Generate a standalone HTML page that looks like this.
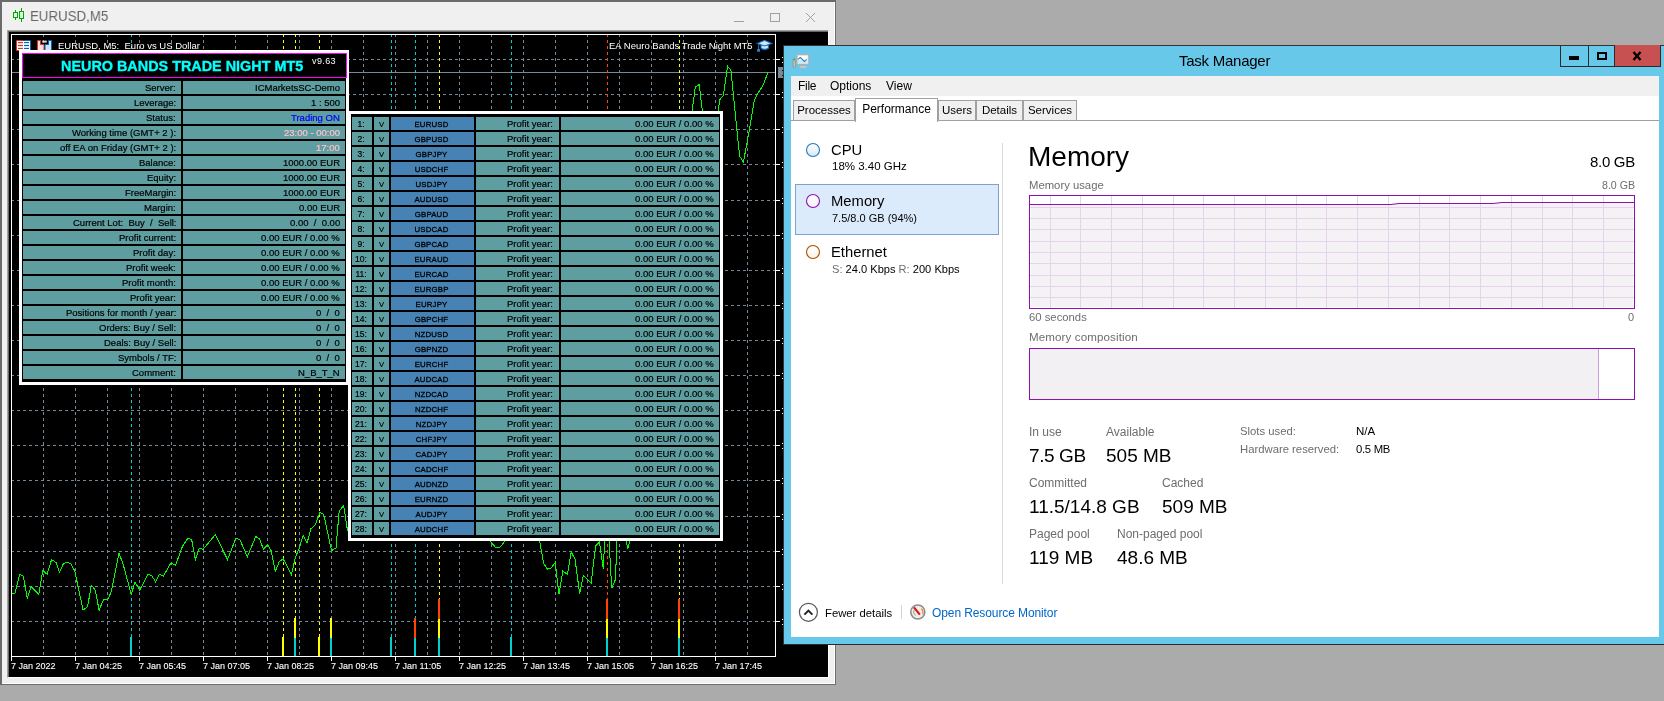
<!DOCTYPE html><html><head><meta charset="utf-8"><style>
*{margin:0;padding:0;box-sizing:border-box}
html,body{width:1664px;height:701px;overflow:hidden;background:#ababab;font-family:"Liberation Sans",sans-serif}
.abs{position:absolute}
.t{position:absolute;white-space:nowrap;line-height:1;will-change:transform}
.k{-webkit-text-stroke:0.25px currentColor}

</style></head><body>
<div class="abs" style="left:0;top:0;width:836px;height:685px;background:#f0f0f0;border-left:2px solid #6b6b6b;border-top:2px solid #6b6b6b;border-right:1px solid #6e6e6e;border-bottom:1px solid #6e6e6e;box-shadow:inset -1px -1px 0 #fff"></div>
<svg class="abs" style="left:0;top:0" width="30" height="30"><g stroke="#00a800" stroke-width="1" fill="#e0ffe0">
<line x1="15.5" y1="10" x2="15.5" y2="20"/><rect x="13.5" y="12.5" width="4" height="5"/>
<line x1="21.5" y1="8" x2="21.5" y2="22"/><rect x="19.5" y="11.5" width="4" height="7"/></g></svg>
<div class="t" style="left:30px;top:7.8px;font-size:15.5px;color:#686868;transform-origin:0 0;transform:scaleX(0.857)">EURUSD,M5</div>
<svg class="abs" style="left:720px;top:0" width="110" height="30"><g stroke="#a0a0a0" stroke-width="1" fill="none">
<line x1="14" y1="21.5" x2="24" y2="21.5"/>
<rect x="50.5" y="13.5" width="9" height="8"/>
<line x1="86" y1="13" x2="95" y2="22"/><line x1="95" y1="13" x2="86" y2="22"/></g></svg>
<div class="abs" style="left:7px;top:30px;width:822px;height:648px;background:#000;border-left:1px solid #a0a0a0;border-top:1px solid #a0a0a0;border-right:1px solid #ffffff;border-bottom:1px solid #ffffff;box-shadow:inset 1px 1px 0 #696969"></div>
<svg class="abs" style="left:0;top:0" width="836" height="686"><line x1="11" y1="59.5" x2="775" y2="59.5" stroke="#778899" stroke-dasharray="3 3"/><line x1="11" y1="94.5" x2="775" y2="94.5" stroke="#778899" stroke-dasharray="3 3"/><line x1="11" y1="129.5" x2="775" y2="129.5" stroke="#778899" stroke-dasharray="3 3"/><line x1="11" y1="164.5" x2="775" y2="164.5" stroke="#778899" stroke-dasharray="3 3"/><line x1="11" y1="200.5" x2="775" y2="200.5" stroke="#778899" stroke-dasharray="3 3"/><line x1="11" y1="235.5" x2="775" y2="235.5" stroke="#778899" stroke-dasharray="3 3"/><line x1="11" y1="270.5" x2="775" y2="270.5" stroke="#778899" stroke-dasharray="3 3"/><line x1="11" y1="305.5" x2="775" y2="305.5" stroke="#778899" stroke-dasharray="3 3"/><line x1="11" y1="340.5" x2="775" y2="340.5" stroke="#778899" stroke-dasharray="3 3"/><line x1="11" y1="375.5" x2="775" y2="375.5" stroke="#778899" stroke-dasharray="3 3"/><line x1="11" y1="410.5" x2="775" y2="410.5" stroke="#778899" stroke-dasharray="3 3"/><line x1="11" y1="445.5" x2="775" y2="445.5" stroke="#778899" stroke-dasharray="3 3"/><line x1="11" y1="480.5" x2="775" y2="480.5" stroke="#778899" stroke-dasharray="3 3"/><line x1="11" y1="516.5" x2="775" y2="516.5" stroke="#778899" stroke-dasharray="3 3"/><line x1="11" y1="551.5" x2="775" y2="551.5" stroke="#778899" stroke-dasharray="3 3"/><line x1="11" y1="586.5" x2="775" y2="586.5" stroke="#778899" stroke-dasharray="3 3"/><line x1="11" y1="621.5" x2="775" y2="621.5" stroke="#778899" stroke-dasharray="3 3"/><line x1="43.5" y1="34" x2="43.5" y2="656" stroke="#778899" stroke-dasharray="3 3"/><line x1="75.5" y1="34" x2="75.5" y2="656" stroke="#778899" stroke-dasharray="3 3"/><line x1="107.5" y1="34" x2="107.5" y2="656" stroke="#778899" stroke-dasharray="3 3"/><line x1="139.5" y1="34" x2="139.5" y2="656" stroke="#778899" stroke-dasharray="3 3"/><line x1="171.5" y1="34" x2="171.5" y2="656" stroke="#778899" stroke-dasharray="3 3"/><line x1="203.5" y1="34" x2="203.5" y2="656" stroke="#778899" stroke-dasharray="3 3"/><line x1="235.5" y1="34" x2="235.5" y2="656" stroke="#778899" stroke-dasharray="3 3"/><line x1="267.5" y1="34" x2="267.5" y2="656" stroke="#778899" stroke-dasharray="3 3"/><line x1="299.5" y1="34" x2="299.5" y2="656" stroke="#778899" stroke-dasharray="3 3"/><line x1="331.5" y1="34" x2="331.5" y2="656" stroke="#778899" stroke-dasharray="3 3"/><line x1="363.5" y1="34" x2="363.5" y2="656" stroke="#778899" stroke-dasharray="3 3"/><line x1="395.5" y1="34" x2="395.5" y2="656" stroke="#778899" stroke-dasharray="3 3"/><line x1="427.5" y1="34" x2="427.5" y2="656" stroke="#778899" stroke-dasharray="3 3"/><line x1="459.5" y1="34" x2="459.5" y2="656" stroke="#778899" stroke-dasharray="3 3"/><line x1="491.5" y1="34" x2="491.5" y2="656" stroke="#778899" stroke-dasharray="3 3"/><line x1="523.5" y1="34" x2="523.5" y2="656" stroke="#778899" stroke-dasharray="3 3"/><line x1="555.5" y1="34" x2="555.5" y2="656" stroke="#778899" stroke-dasharray="3 3"/><line x1="587.5" y1="34" x2="587.5" y2="656" stroke="#778899" stroke-dasharray="3 3"/><line x1="619.5" y1="34" x2="619.5" y2="656" stroke="#778899" stroke-dasharray="3 3"/><line x1="651.5" y1="34" x2="651.5" y2="656" stroke="#778899" stroke-dasharray="3 3"/><line x1="683.5" y1="34" x2="683.5" y2="656" stroke="#778899" stroke-dasharray="3 3"/><line x1="715.5" y1="34" x2="715.5" y2="656" stroke="#778899" stroke-dasharray="3 3"/><line x1="747.5" y1="34" x2="747.5" y2="656" stroke="#778899" stroke-dasharray="3 3"/><line x1="11" y1="72.5" x2="775" y2="72.5" stroke="#778899"/><line x1="131.5" y1="34" x2="131.5" y2="656" stroke="#00ced1" stroke-dasharray="3 3"/><line x1="283.5" y1="34" x2="283.5" y2="656" stroke="#ffff00" stroke-dasharray="3 3"/><line x1="295.5" y1="34" x2="295.5" y2="656" stroke="#ffff00" stroke-dasharray="3 3"/><line x1="319.5" y1="34" x2="319.5" y2="656" stroke="#ffff00" stroke-dasharray="3 3"/><line x1="391.5" y1="34" x2="391.5" y2="656" stroke="#00ced1" stroke-dasharray="3 3"/><line x1="415.5" y1="34" x2="415.5" y2="656" stroke="#00ced1" stroke-dasharray="3 3"/><line x1="439.5" y1="34" x2="439.5" y2="656" stroke="#ffff00" stroke-dasharray="3 3"/><line x1="511.5" y1="34" x2="511.5" y2="656" stroke="#00ced1" stroke-dasharray="3 3"/><line x1="607.5" y1="34" x2="607.5" y2="656" stroke="#ff4500" stroke-dasharray="3 3"/><line x1="679.5" y1="34" x2="679.5" y2="656" stroke="#ffff00" stroke-dasharray="3 3"/><rect x="130" y="637" width="2" height="19" fill="#00ced1"/><rect x="282" y="637" width="2" height="19" fill="#ffff00"/><rect x="294" y="638" width="2" height="18" fill="#00ced1"/><rect x="294" y="618" width="2" height="20" fill="#ffff00"/><rect x="318" y="637" width="2" height="19" fill="#ffff00"/><rect x="330" y="638" width="2" height="18" fill="#00ced1"/><rect x="330" y="618" width="2" height="20" fill="#ffff00"/><rect x="390" y="637" width="2" height="19" fill="#00ced1"/><rect x="414" y="638" width="2" height="18" fill="#00ced1"/><rect x="414" y="618" width="2" height="20" fill="#ff4500"/><rect x="438" y="638" width="2" height="18" fill="#00ced1"/><rect x="438" y="619" width="2" height="19" fill="#ffff00"/><rect x="438" y="599" width="2" height="20" fill="#ff4500"/><rect x="510" y="637" width="2" height="19" fill="#00ced1"/><rect x="606" y="638" width="2" height="18" fill="#00ced1"/><rect x="606" y="619" width="2" height="19" fill="#ffff00"/><rect x="606" y="599" width="2" height="20" fill="#ff4500"/><rect x="678" y="638" width="2" height="18" fill="#00ced1"/><rect x="678" y="619" width="2" height="19" fill="#ffff00"/><rect x="678" y="599" width="2" height="20" fill="#ff4500"/><polyline points="11.8,594.2 15.1,592.9 19.6,574.3 23.4,576.2 27.3,598.7 31.1,586.5 38.8,594.2 42.7,570.4 47.1,574.3 51.6,559.5 56.1,562.7 59.4,572.4 63.2,564.0 67.0,562.1 70.9,564.0 74.8,571.0 83.1,610.2 87.6,606.4 91.4,585.2 95.3,590.3 99.1,610.2 103.6,599.3 107.5,600.0 111.3,591.6 119.0,553.1 122.9,563.4 131.2,594.2 135.1,582.0 139.6,590.3 147.9,574.3 151.8,575.6 155.6,582.0 159.5,574.3 163.3,576.2 171.0,562.7 175.5,565.3 182.6,546.0 187.7,538.4 191.6,539.3 195.4,559.6 199.3,548.0 203.1,549.3 215.3,534.6 227.5,559.6 235.8,538.4 239.7,539.3 247.4,556.8 255.7,536.5 259.6,539.0 263.4,549.3 267.9,544.8 271.1,550.6 275.3,571.4 279.3,561.4 283.2,558.9 291.4,574.6 295.7,556.4 298.9,549.3 301.7,540.0 303.2,535.8 307.1,542.9 310.9,528.8 315.4,524.9 319.9,512.1 323.8,514.7 331.5,550.6 336.0,548.0 339.2,510.8 343.7,505.7 347.5,530.7 349.0,520.0" fill="none" stroke="#00ff00" stroke-width="1" shape-rendering="crispEdges"/><polyline points="490.0,541.0 496.0,548.0 500.0,547.3 504.5,541.6 506.0,530.0" fill="none" stroke="#00ff00" stroke-width="1" shape-rendering="crispEdges"/><polyline points="536.0,530.0 539.8,541.6 543.6,563.4 547.5,569.2 551.3,567.9 555.2,562.7 559.0,594.2 562.9,571.1 567.4,574.3 571.2,551.8 575.1,559.5 579.6,593.5 583.4,575.6 591.1,583.3 595.6,546.0 599.5,542.2 603.3,568.5 604.6,541.6 606.0,530.0" fill="none" stroke="#00ff00" stroke-width="1" shape-rendering="crispEdges"/><polyline points="608.0,530.0 609.1,541.6 611.7,588.4 615.5,579.4 616.8,541.6 618.0,530.0" fill="none" stroke="#00ff00" stroke-width="1" shape-rendering="crispEdges"/><polyline points="625.0,530.0 626.4,541.6 627.7,548.6 629.7,541.6 631.0,530.0" fill="none" stroke="#00ff00" stroke-width="1" shape-rendering="crispEdges"/><polyline points="690.0,130.0 692.1,110.9 695.3,87.1 699.2,84.6 702.4,110.9 704.0,130.0" fill="none" stroke="#00ff00" stroke-width="1" shape-rendering="crispEdges"/><polyline points="716.0,130.0 718.2,109.9 720.0,99.6 723.4,95.3 727.6,66.3 731.0,70.5 735.3,114.2 739.6,156.1 743.4,162.1 749.0,132.1 754.2,101.3 756.7,95.3 763.6,84.2 767.9,72.2" fill="none" stroke="#00ff00" stroke-width="1" shape-rendering="crispEdges"/><rect x="11.5" y="34.5" width="764" height="622" fill="none" stroke="#fff"/><line x1="11.5" y1="656" x2="11.5" y2="661" stroke="#fff"/><line x1="75.5" y1="656" x2="75.5" y2="661" stroke="#fff"/><line x1="139.5" y1="656" x2="139.5" y2="661" stroke="#fff"/><line x1="203.5" y1="656" x2="203.5" y2="661" stroke="#fff"/><line x1="267.5" y1="656" x2="267.5" y2="661" stroke="#fff"/><line x1="331.5" y1="656" x2="331.5" y2="661" stroke="#fff"/><line x1="395.5" y1="656" x2="395.5" y2="661" stroke="#fff"/><line x1="459.5" y1="656" x2="459.5" y2="661" stroke="#fff"/><line x1="523.5" y1="656" x2="523.5" y2="661" stroke="#fff"/><line x1="587.5" y1="656" x2="587.5" y2="661" stroke="#fff"/><line x1="651.5" y1="656" x2="651.5" y2="661" stroke="#fff"/><line x1="715.5" y1="656" x2="715.5" y2="661" stroke="#fff"/><line x1="776" y1="59.5" x2="780" y2="59.5" stroke="#fff"/><rect x="782" y="57" width="1" height="1" fill="#fff"/><rect x="782" y="62" width="1" height="1" fill="#fff"/><line x1="776" y1="94.5" x2="780" y2="94.5" stroke="#fff"/><rect x="782" y="92" width="1" height="1" fill="#fff"/><rect x="782" y="97" width="1" height="1" fill="#fff"/><line x1="776" y1="129.5" x2="780" y2="129.5" stroke="#fff"/><rect x="782" y="127" width="1" height="1" fill="#fff"/><rect x="782" y="132" width="1" height="1" fill="#fff"/><line x1="776" y1="164.5" x2="780" y2="164.5" stroke="#fff"/><rect x="782" y="162" width="1" height="1" fill="#fff"/><rect x="782" y="167" width="1" height="1" fill="#fff"/><line x1="776" y1="200.5" x2="780" y2="200.5" stroke="#fff"/><rect x="782" y="198" width="1" height="1" fill="#fff"/><rect x="782" y="203" width="1" height="1" fill="#fff"/><line x1="776" y1="235.5" x2="780" y2="235.5" stroke="#fff"/><rect x="782" y="233" width="1" height="1" fill="#fff"/><rect x="782" y="238" width="1" height="1" fill="#fff"/><line x1="776" y1="270.5" x2="780" y2="270.5" stroke="#fff"/><rect x="782" y="268" width="1" height="1" fill="#fff"/><rect x="782" y="273" width="1" height="1" fill="#fff"/><line x1="776" y1="305.5" x2="780" y2="305.5" stroke="#fff"/><rect x="782" y="303" width="1" height="1" fill="#fff"/><rect x="782" y="308" width="1" height="1" fill="#fff"/><line x1="776" y1="340.5" x2="780" y2="340.5" stroke="#fff"/><rect x="782" y="338" width="1" height="1" fill="#fff"/><rect x="782" y="343" width="1" height="1" fill="#fff"/><line x1="776" y1="375.5" x2="780" y2="375.5" stroke="#fff"/><rect x="782" y="373" width="1" height="1" fill="#fff"/><rect x="782" y="378" width="1" height="1" fill="#fff"/><line x1="776" y1="410.5" x2="780" y2="410.5" stroke="#fff"/><rect x="782" y="408" width="1" height="1" fill="#fff"/><rect x="782" y="413" width="1" height="1" fill="#fff"/><line x1="776" y1="445.5" x2="780" y2="445.5" stroke="#fff"/><rect x="782" y="443" width="1" height="1" fill="#fff"/><rect x="782" y="448" width="1" height="1" fill="#fff"/><line x1="776" y1="480.5" x2="780" y2="480.5" stroke="#fff"/><rect x="782" y="478" width="1" height="1" fill="#fff"/><rect x="782" y="483" width="1" height="1" fill="#fff"/><line x1="776" y1="516.5" x2="780" y2="516.5" stroke="#fff"/><rect x="782" y="514" width="1" height="1" fill="#fff"/><rect x="782" y="519" width="1" height="1" fill="#fff"/><line x1="776" y1="551.5" x2="780" y2="551.5" stroke="#fff"/><rect x="782" y="549" width="1" height="1" fill="#fff"/><rect x="782" y="554" width="1" height="1" fill="#fff"/><line x1="776" y1="586.5" x2="780" y2="586.5" stroke="#fff"/><rect x="782" y="584" width="1" height="1" fill="#fff"/><rect x="782" y="589" width="1" height="1" fill="#fff"/><line x1="776" y1="621.5" x2="780" y2="621.5" stroke="#fff"/><rect x="782" y="619" width="1" height="1" fill="#fff"/><rect x="782" y="624" width="1" height="1" fill="#fff"/><rect x="778" y="67" width="6" height="11" fill="#778899"/><rect x="782" y="70" width="1" height="1" fill="#000"/><rect x="782" y="75" width="1" height="1" fill="#000"/></svg>
<div class="t" style="left:10.6px;top:662.0px;font-size:9px;color:#fff;-webkit-text-stroke:0.1px #fff">7 Jan 2022</div>
<div class="t" style="left:74.6px;top:662.0px;font-size:9px;color:#fff;-webkit-text-stroke:0.1px #fff">7 Jan 04:25</div>
<div class="t" style="left:138.6px;top:662.0px;font-size:9px;color:#fff;-webkit-text-stroke:0.1px #fff">7 Jan 05:45</div>
<div class="t" style="left:202.6px;top:662.0px;font-size:9px;color:#fff;-webkit-text-stroke:0.1px #fff">7 Jan 07:05</div>
<div class="t" style="left:266.6px;top:662.0px;font-size:9px;color:#fff;-webkit-text-stroke:0.1px #fff">7 Jan 08:25</div>
<div class="t" style="left:330.6px;top:662.0px;font-size:9px;color:#fff;-webkit-text-stroke:0.1px #fff">7 Jan 09:45</div>
<div class="t" style="left:394.6px;top:662.0px;font-size:9px;color:#fff;-webkit-text-stroke:0.1px #fff">7 Jan 11:05</div>
<div class="t" style="left:458.6px;top:662.0px;font-size:9px;color:#fff;-webkit-text-stroke:0.1px #fff">7 Jan 12:25</div>
<div class="t" style="left:522.6px;top:662.0px;font-size:9px;color:#fff;-webkit-text-stroke:0.1px #fff">7 Jan 13:45</div>
<div class="t" style="left:586.6px;top:662.0px;font-size:9px;color:#fff;-webkit-text-stroke:0.1px #fff">7 Jan 15:05</div>
<div class="t" style="left:650.6px;top:662.0px;font-size:9px;color:#fff;-webkit-text-stroke:0.1px #fff">7 Jan 16:25</div>
<div class="t" style="left:714.6px;top:662.0px;font-size:9px;color:#fff;-webkit-text-stroke:0.1px #fff">7 Jan 17:45</div>
<div class="t" style="left:57.5px;top:41px;font-size:9.5px;color:#fff">EURUSD, M5:&nbsp; Euro vs US Dollar</div>
<div class="t" style="left:609px;top:41px;font-size:9.5px;color:#fff">EA Neuro Bands Trade Night MT5</div>
<svg class="abs" style="left:14px;top:38px" width="42" height="14">
<rect x="3" y="3" width="13" height="9" fill="#fff"/>
<rect x="4" y="5" width="5" height="2" fill="#fde0d8"/><rect x="4" y="8" width="5" height="2" fill="#fde0d8"/>
<rect x="10" y="5" width="5" height="2" fill="#d0eeff"/><rect x="10" y="8" width="5" height="2" fill="#d0eeff"/>
<path d="M9.5 2.5 H2.5 V12.5 H9.5" fill="none" stroke="#e03028"/><path d="M9.5 2.5 H16.5 V12.5 H9.5" fill="none" stroke="#1060b0"/>
<g stroke="#e03028"><line x1="4" y1="4.5" x2="9" y2="4.5"/><line x1="4" y1="7.5" x2="9" y2="7.5"/><line x1="4" y1="10.5" x2="9" y2="10.5"/></g>
<g stroke="#1060b0"><line x1="10" y1="4.5" x2="15" y2="4.5"/><line x1="10" y1="7.5" x2="15" y2="7.5"/><line x1="10" y1="10.5" x2="15" y2="10.5"/></g>
<path d="M23.5 2.5 h3 v4 h3.5 v6 h-6.5 z" fill="#ffe0d8" stroke="#e03028"/>
<path d="M37.5 2.5 v10 h-6.5 v-6 h3.5 v-4 z" fill="#c8e6ff" stroke="#1060b0"/>
<rect x="28.2" y="2.6" width="4.6" height="2" fill="#d8d8d8"/>
</svg>
<svg class="abs" style="left:750px;top:36px" width="28" height="20">
<path d="M11 9.2 v3 q3.6 2.4 7.4 0 v-3" fill="#c8e8fc" stroke="#1a6cc0" stroke-width="1.1"/>
<path d="M7.2 7.4 L14.5 4.3 L21.8 7.4 L14.5 10 Z" fill="#c8e8fc" stroke="#1a6cc0" stroke-width="1.1"/>
<line x1="8.6" y1="7.4" x2="8.6" y2="13.5" stroke="#1a6cc0" stroke-width="1.1"/><rect x="7.1" y="13" width="2.9" height="2.7" fill="#2a7fd4"/>
</svg>
<div class="abs" style="left:19px;top:50px;width:330px;height:335px;background:#fff"></div>
<div class="abs" style="left:22px;top:53px;width:324px;height:329px;background:#000"></div>
<div class="abs" style="left:22px;top:53px;width:325px;height:25px;border:1px solid #ff00ff;background:#000"></div>
<div class="t" style="left:60.8px;top:58.9px;font-size:14.4px;font-weight:bold;color:#00ffff;-webkit-text-stroke:0.35px #00ffff">NEURO BANDS TRADE NIGHT MT5</div>
<div class="t" style="left:312px;top:56.6px;font-size:9px;color:#fff;letter-spacing:0.4px">v9.63</div>
<div class="abs" style="left:23px;top:81px;width:158px;height:13px;background:#5f9ea0"></div>
<div class="abs" style="left:183px;top:81px;width:162px;height:13px;background:#5f9ea0"></div>
<div class="t" style="right:1488px;top:83.2px;font-size:9.5px;color:#000;-webkit-text-stroke:0.2px #000">Server:</div>
<div class="t" style="right:1324px;top:83.2px;font-size:9.5px;color:#000;-webkit-text-stroke:0.2px #000">ICMarketsSC-Demo</div>
<div class="abs" style="left:23px;top:96px;width:158px;height:13px;background:#5f9ea0"></div>
<div class="abs" style="left:183px;top:96px;width:162px;height:13px;background:#5f9ea0"></div>
<div class="t" style="right:1488px;top:98.2px;font-size:9.5px;color:#000;-webkit-text-stroke:0.2px #000">Leverage:</div>
<div class="t" style="right:1324px;top:98.2px;font-size:9.5px;color:#000;-webkit-text-stroke:0.2px #000">1 : 500</div>
<div class="abs" style="left:23px;top:111px;width:158px;height:13px;background:#5f9ea0"></div>
<div class="abs" style="left:183px;top:111px;width:162px;height:13px;background:#5f9ea0"></div>
<div class="t" style="right:1488px;top:113.2px;font-size:9.5px;color:#000;-webkit-text-stroke:0.2px #000">Status:</div>
<div class="t" style="right:1324px;top:113.2px;font-size:9.5px;color:#0000ff;-webkit-text-stroke:0.2px #0000ff">Trading ON</div>
<div class="abs" style="left:23px;top:126px;width:158px;height:13px;background:#5f9ea0"></div>
<div class="abs" style="left:183px;top:126px;width:162px;height:13px;background:#5f9ea0"></div>
<div class="t" style="right:1488px;top:128.2px;font-size:9.5px;color:#000;-webkit-text-stroke:0.2px #000">Working time (GMT+ 2 ):</div>
<div class="t" style="right:1324px;top:128.2px;font-size:9.5px;color:#ffc0cb;-webkit-text-stroke:0.2px #ffc0cb">23:00 - 00:00</div>
<div class="abs" style="left:23px;top:141px;width:158px;height:13px;background:#5f9ea0"></div>
<div class="abs" style="left:183px;top:141px;width:162px;height:13px;background:#5f9ea0"></div>
<div class="t" style="right:1488px;top:143.2px;font-size:9.5px;color:#000;-webkit-text-stroke:0.2px #000">off EA on Friday (GMT+ 2 ):</div>
<div class="t" style="right:1324px;top:143.2px;font-size:9.5px;color:#ffc0cb;-webkit-text-stroke:0.2px #ffc0cb">17:00</div>
<div class="abs" style="left:23px;top:156px;width:158px;height:13px;background:#5f9ea0"></div>
<div class="abs" style="left:183px;top:156px;width:162px;height:13px;background:#5f9ea0"></div>
<div class="t" style="right:1488px;top:158.2px;font-size:9.5px;color:#000;-webkit-text-stroke:0.2px #000">Balance:</div>
<div class="t" style="right:1324px;top:158.2px;font-size:9.5px;color:#000;-webkit-text-stroke:0.2px #000">1000.00 EUR</div>
<div class="abs" style="left:23px;top:171px;width:158px;height:13px;background:#5f9ea0"></div>
<div class="abs" style="left:183px;top:171px;width:162px;height:13px;background:#5f9ea0"></div>
<div class="t" style="right:1488px;top:173.2px;font-size:9.5px;color:#000;-webkit-text-stroke:0.2px #000">Equity:</div>
<div class="t" style="right:1324px;top:173.2px;font-size:9.5px;color:#000;-webkit-text-stroke:0.2px #000">1000.00 EUR</div>
<div class="abs" style="left:23px;top:186px;width:158px;height:13px;background:#5f9ea0"></div>
<div class="abs" style="left:183px;top:186px;width:162px;height:13px;background:#5f9ea0"></div>
<div class="t" style="right:1488px;top:188.2px;font-size:9.5px;color:#000;-webkit-text-stroke:0.2px #000">FreeMargin:</div>
<div class="t" style="right:1324px;top:188.2px;font-size:9.5px;color:#000;-webkit-text-stroke:0.2px #000">1000.00 EUR</div>
<div class="abs" style="left:23px;top:201px;width:158px;height:13px;background:#5f9ea0"></div>
<div class="abs" style="left:183px;top:201px;width:162px;height:13px;background:#5f9ea0"></div>
<div class="t" style="right:1488px;top:203.2px;font-size:9.5px;color:#000;-webkit-text-stroke:0.2px #000">Margin:</div>
<div class="t" style="right:1324px;top:203.2px;font-size:9.5px;color:#000;-webkit-text-stroke:0.2px #000">0.00 EUR</div>
<div class="abs" style="left:23px;top:216px;width:158px;height:13px;background:#5f9ea0"></div>
<div class="abs" style="left:183px;top:216px;width:162px;height:13px;background:#5f9ea0"></div>
<div class="t" style="right:1488px;top:218.2px;font-size:9.5px;color:#000;-webkit-text-stroke:0.2px #000">Current Lot:&nbsp; Buy&nbsp; /&nbsp; Sell:</div>
<div class="t" style="right:1324px;top:218.2px;font-size:9.5px;color:#000;-webkit-text-stroke:0.2px #000">0.00&nbsp; /&nbsp; 0.00</div>
<div class="abs" style="left:23px;top:231px;width:158px;height:13px;background:#5f9ea0"></div>
<div class="abs" style="left:183px;top:231px;width:162px;height:13px;background:#5f9ea0"></div>
<div class="t" style="right:1488px;top:233.2px;font-size:9.5px;color:#000;-webkit-text-stroke:0.2px #000">Profit current:</div>
<div class="t" style="right:1324px;top:233.2px;font-size:9.5px;color:#000;-webkit-text-stroke:0.2px #000">0.00 EUR / 0.00 %</div>
<div class="abs" style="left:23px;top:246px;width:158px;height:13px;background:#5f9ea0"></div>
<div class="abs" style="left:183px;top:246px;width:162px;height:13px;background:#5f9ea0"></div>
<div class="t" style="right:1488px;top:248.2px;font-size:9.5px;color:#000;-webkit-text-stroke:0.2px #000">Profit day:</div>
<div class="t" style="right:1324px;top:248.2px;font-size:9.5px;color:#000;-webkit-text-stroke:0.2px #000">0.00 EUR / 0.00 %</div>
<div class="abs" style="left:23px;top:261px;width:158px;height:13px;background:#5f9ea0"></div>
<div class="abs" style="left:183px;top:261px;width:162px;height:13px;background:#5f9ea0"></div>
<div class="t" style="right:1488px;top:263.2px;font-size:9.5px;color:#000;-webkit-text-stroke:0.2px #000">Profit week:</div>
<div class="t" style="right:1324px;top:263.2px;font-size:9.5px;color:#000;-webkit-text-stroke:0.2px #000">0.00 EUR / 0.00 %</div>
<div class="abs" style="left:23px;top:276px;width:158px;height:13px;background:#5f9ea0"></div>
<div class="abs" style="left:183px;top:276px;width:162px;height:13px;background:#5f9ea0"></div>
<div class="t" style="right:1488px;top:278.2px;font-size:9.5px;color:#000;-webkit-text-stroke:0.2px #000">Profit month:</div>
<div class="t" style="right:1324px;top:278.2px;font-size:9.5px;color:#000;-webkit-text-stroke:0.2px #000">0.00 EUR / 0.00 %</div>
<div class="abs" style="left:23px;top:291px;width:158px;height:13px;background:#5f9ea0"></div>
<div class="abs" style="left:183px;top:291px;width:162px;height:13px;background:#5f9ea0"></div>
<div class="t" style="right:1488px;top:293.2px;font-size:9.5px;color:#000;-webkit-text-stroke:0.2px #000">Profit year:</div>
<div class="t" style="right:1324px;top:293.2px;font-size:9.5px;color:#000;-webkit-text-stroke:0.2px #000">0.00 EUR / 0.00 %</div>
<div class="abs" style="left:23px;top:306px;width:158px;height:13px;background:#5f9ea0"></div>
<div class="abs" style="left:183px;top:306px;width:162px;height:13px;background:#5f9ea0"></div>
<div class="t" style="right:1488px;top:308.2px;font-size:9.5px;color:#000;-webkit-text-stroke:0.2px #000">Positions for month / year:</div>
<div class="t" style="right:1324px;top:308.2px;font-size:9.5px;color:#000;-webkit-text-stroke:0.2px #000">0&nbsp; /&nbsp; 0</div>
<div class="abs" style="left:23px;top:321px;width:158px;height:13px;background:#5f9ea0"></div>
<div class="abs" style="left:183px;top:321px;width:162px;height:13px;background:#5f9ea0"></div>
<div class="t" style="right:1488px;top:323.2px;font-size:9.5px;color:#000;-webkit-text-stroke:0.2px #000">Orders: Buy / Sell:</div>
<div class="t" style="right:1324px;top:323.2px;font-size:9.5px;color:#000;-webkit-text-stroke:0.2px #000">0&nbsp; /&nbsp; 0</div>
<div class="abs" style="left:23px;top:336px;width:158px;height:13px;background:#5f9ea0"></div>
<div class="abs" style="left:183px;top:336px;width:162px;height:13px;background:#5f9ea0"></div>
<div class="t" style="right:1488px;top:338.2px;font-size:9.5px;color:#000;-webkit-text-stroke:0.2px #000">Deals: Buy / Sell:</div>
<div class="t" style="right:1324px;top:338.2px;font-size:9.5px;color:#000;-webkit-text-stroke:0.2px #000">0&nbsp; /&nbsp; 0</div>
<div class="abs" style="left:23px;top:351px;width:158px;height:13px;background:#5f9ea0"></div>
<div class="abs" style="left:183px;top:351px;width:162px;height:13px;background:#5f9ea0"></div>
<div class="t" style="right:1488px;top:353.2px;font-size:9.5px;color:#000;-webkit-text-stroke:0.2px #000">Symbols / TF:</div>
<div class="t" style="right:1324px;top:353.2px;font-size:9.5px;color:#000;-webkit-text-stroke:0.2px #000">0&nbsp; /&nbsp; 0</div>
<div class="abs" style="left:23px;top:366px;width:158px;height:13px;background:#5f9ea0"></div>
<div class="abs" style="left:183px;top:366px;width:162px;height:13px;background:#5f9ea0"></div>
<div class="t" style="right:1488px;top:368.2px;font-size:9.5px;color:#000;-webkit-text-stroke:0.2px #000">Comment:</div>
<div class="t" style="right:1324px;top:368.2px;font-size:9.5px;color:#000;-webkit-text-stroke:0.2px #000">N_B_T_N</div>
<div class="abs" style="left:348px;top:111px;width:375px;height:430px;background:#fff"></div>
<div class="abs" style="left:351px;top:114px;width:369px;height:424px;background:#000"></div>
<div class="abs" style="left:352px;top:117px;width:20px;height:13px;background:#5f9ea0"></div>
<div class="abs" style="left:374px;top:117px;width:15px;height:13px;background:#5f9ea0"></div>
<div class="abs" style="left:391px;top:117px;width:83px;height:13px;background:#4682b4"></div>
<div class="abs" style="left:476px;top:117px;width:83px;height:13px;background:#5f9ea0"></div>
<div class="abs" style="left:561px;top:117px;width:158px;height:13px;background:#5f9ea0"></div>
<div class="t" style="left:351px;width:20px;text-align:center;top:119.9px;font-size:8.5px;color:#000;-webkit-text-stroke:0.2px #000">1:</div>
<div class="t" style="left:374px;width:15px;text-align:center;top:120.6px;font-size:7.6px;color:#000;-webkit-text-stroke:0.2px #000">V</div>
<div class="t" style="left:389.5px;width:83px;text-align:center;top:120.5px;font-size:7.8px;color:#000;letter-spacing:0.2px;-webkit-text-stroke:0.3px #000">EURUSD</div>
<div class="t" style="right:1111px;top:119px;font-size:9.5px;color:#000;-webkit-text-stroke:0.2px #000">Profit year:</div>
<div class="t" style="right:950px;top:119px;font-size:9.5px;color:#000;-webkit-text-stroke:0.2px #000">0.00 EUR / 0.00 %</div>
<div class="abs" style="left:352px;top:132px;width:20px;height:13px;background:#5f9ea0"></div>
<div class="abs" style="left:374px;top:132px;width:15px;height:13px;background:#5f9ea0"></div>
<div class="abs" style="left:391px;top:132px;width:83px;height:13px;background:#4682b4"></div>
<div class="abs" style="left:476px;top:132px;width:83px;height:13px;background:#5f9ea0"></div>
<div class="abs" style="left:561px;top:132px;width:158px;height:13px;background:#5f9ea0"></div>
<div class="t" style="left:351px;width:20px;text-align:center;top:134.9px;font-size:8.5px;color:#000;-webkit-text-stroke:0.2px #000">2:</div>
<div class="t" style="left:374px;width:15px;text-align:center;top:135.6px;font-size:7.6px;color:#000;-webkit-text-stroke:0.2px #000">V</div>
<div class="t" style="left:389.5px;width:83px;text-align:center;top:135.5px;font-size:7.8px;color:#000;letter-spacing:0.2px;-webkit-text-stroke:0.3px #000">GBPUSD</div>
<div class="t" style="right:1111px;top:134px;font-size:9.5px;color:#000;-webkit-text-stroke:0.2px #000">Profit year:</div>
<div class="t" style="right:950px;top:134px;font-size:9.5px;color:#000;-webkit-text-stroke:0.2px #000">0.00 EUR / 0.00 %</div>
<div class="abs" style="left:352px;top:147px;width:20px;height:13px;background:#5f9ea0"></div>
<div class="abs" style="left:374px;top:147px;width:15px;height:13px;background:#5f9ea0"></div>
<div class="abs" style="left:391px;top:147px;width:83px;height:13px;background:#4682b4"></div>
<div class="abs" style="left:476px;top:147px;width:83px;height:13px;background:#5f9ea0"></div>
<div class="abs" style="left:561px;top:147px;width:158px;height:13px;background:#5f9ea0"></div>
<div class="t" style="left:351px;width:20px;text-align:center;top:149.9px;font-size:8.5px;color:#000;-webkit-text-stroke:0.2px #000">3:</div>
<div class="t" style="left:374px;width:15px;text-align:center;top:150.6px;font-size:7.6px;color:#000;-webkit-text-stroke:0.2px #000">V</div>
<div class="t" style="left:389.5px;width:83px;text-align:center;top:150.5px;font-size:7.8px;color:#000;letter-spacing:0.2px;-webkit-text-stroke:0.3px #000">GBPJPY</div>
<div class="t" style="right:1111px;top:149px;font-size:9.5px;color:#000;-webkit-text-stroke:0.2px #000">Profit year:</div>
<div class="t" style="right:950px;top:149px;font-size:9.5px;color:#000;-webkit-text-stroke:0.2px #000">0.00 EUR / 0.00 %</div>
<div class="abs" style="left:352px;top:162px;width:20px;height:13px;background:#5f9ea0"></div>
<div class="abs" style="left:374px;top:162px;width:15px;height:13px;background:#5f9ea0"></div>
<div class="abs" style="left:391px;top:162px;width:83px;height:13px;background:#4682b4"></div>
<div class="abs" style="left:476px;top:162px;width:83px;height:13px;background:#5f9ea0"></div>
<div class="abs" style="left:561px;top:162px;width:158px;height:13px;background:#5f9ea0"></div>
<div class="t" style="left:351px;width:20px;text-align:center;top:164.9px;font-size:8.5px;color:#000;-webkit-text-stroke:0.2px #000">4:</div>
<div class="t" style="left:374px;width:15px;text-align:center;top:165.6px;font-size:7.6px;color:#000;-webkit-text-stroke:0.2px #000">V</div>
<div class="t" style="left:389.5px;width:83px;text-align:center;top:165.5px;font-size:7.8px;color:#000;letter-spacing:0.2px;-webkit-text-stroke:0.3px #000">USDCHF</div>
<div class="t" style="right:1111px;top:164px;font-size:9.5px;color:#000;-webkit-text-stroke:0.2px #000">Profit year:</div>
<div class="t" style="right:950px;top:164px;font-size:9.5px;color:#000;-webkit-text-stroke:0.2px #000">0.00 EUR / 0.00 %</div>
<div class="abs" style="left:352px;top:177px;width:20px;height:13px;background:#5f9ea0"></div>
<div class="abs" style="left:374px;top:177px;width:15px;height:13px;background:#5f9ea0"></div>
<div class="abs" style="left:391px;top:177px;width:83px;height:13px;background:#4682b4"></div>
<div class="abs" style="left:476px;top:177px;width:83px;height:13px;background:#5f9ea0"></div>
<div class="abs" style="left:561px;top:177px;width:158px;height:13px;background:#5f9ea0"></div>
<div class="t" style="left:351px;width:20px;text-align:center;top:179.9px;font-size:8.5px;color:#000;-webkit-text-stroke:0.2px #000">5:</div>
<div class="t" style="left:374px;width:15px;text-align:center;top:180.6px;font-size:7.6px;color:#000;-webkit-text-stroke:0.2px #000">V</div>
<div class="t" style="left:389.5px;width:83px;text-align:center;top:180.5px;font-size:7.8px;color:#000;letter-spacing:0.2px;-webkit-text-stroke:0.3px #000">USDJPY</div>
<div class="t" style="right:1111px;top:179px;font-size:9.5px;color:#000;-webkit-text-stroke:0.2px #000">Profit year:</div>
<div class="t" style="right:950px;top:179px;font-size:9.5px;color:#000;-webkit-text-stroke:0.2px #000">0.00 EUR / 0.00 %</div>
<div class="abs" style="left:352px;top:192px;width:20px;height:13px;background:#5f9ea0"></div>
<div class="abs" style="left:374px;top:192px;width:15px;height:13px;background:#5f9ea0"></div>
<div class="abs" style="left:391px;top:192px;width:83px;height:13px;background:#4682b4"></div>
<div class="abs" style="left:476px;top:192px;width:83px;height:13px;background:#5f9ea0"></div>
<div class="abs" style="left:561px;top:192px;width:158px;height:13px;background:#5f9ea0"></div>
<div class="t" style="left:351px;width:20px;text-align:center;top:194.9px;font-size:8.5px;color:#000;-webkit-text-stroke:0.2px #000">6:</div>
<div class="t" style="left:374px;width:15px;text-align:center;top:195.6px;font-size:7.6px;color:#000;-webkit-text-stroke:0.2px #000">V</div>
<div class="t" style="left:389.5px;width:83px;text-align:center;top:195.5px;font-size:7.8px;color:#000;letter-spacing:0.2px;-webkit-text-stroke:0.3px #000">AUDUSD</div>
<div class="t" style="right:1111px;top:194px;font-size:9.5px;color:#000;-webkit-text-stroke:0.2px #000">Profit year:</div>
<div class="t" style="right:950px;top:194px;font-size:9.5px;color:#000;-webkit-text-stroke:0.2px #000">0.00 EUR / 0.00 %</div>
<div class="abs" style="left:352px;top:207px;width:20px;height:13px;background:#5f9ea0"></div>
<div class="abs" style="left:374px;top:207px;width:15px;height:13px;background:#5f9ea0"></div>
<div class="abs" style="left:391px;top:207px;width:83px;height:13px;background:#4682b4"></div>
<div class="abs" style="left:476px;top:207px;width:83px;height:13px;background:#5f9ea0"></div>
<div class="abs" style="left:561px;top:207px;width:158px;height:13px;background:#5f9ea0"></div>
<div class="t" style="left:351px;width:20px;text-align:center;top:209.9px;font-size:8.5px;color:#000;-webkit-text-stroke:0.2px #000">7:</div>
<div class="t" style="left:374px;width:15px;text-align:center;top:210.6px;font-size:7.6px;color:#000;-webkit-text-stroke:0.2px #000">V</div>
<div class="t" style="left:389.5px;width:83px;text-align:center;top:210.5px;font-size:7.8px;color:#000;letter-spacing:0.2px;-webkit-text-stroke:0.3px #000">GBPAUD</div>
<div class="t" style="right:1111px;top:209px;font-size:9.5px;color:#000;-webkit-text-stroke:0.2px #000">Profit year:</div>
<div class="t" style="right:950px;top:209px;font-size:9.5px;color:#000;-webkit-text-stroke:0.2px #000">0.00 EUR / 0.00 %</div>
<div class="abs" style="left:352px;top:222px;width:20px;height:13px;background:#5f9ea0"></div>
<div class="abs" style="left:374px;top:222px;width:15px;height:13px;background:#5f9ea0"></div>
<div class="abs" style="left:391px;top:222px;width:83px;height:13px;background:#4682b4"></div>
<div class="abs" style="left:476px;top:222px;width:83px;height:13px;background:#5f9ea0"></div>
<div class="abs" style="left:561px;top:222px;width:158px;height:13px;background:#5f9ea0"></div>
<div class="t" style="left:351px;width:20px;text-align:center;top:224.9px;font-size:8.5px;color:#000;-webkit-text-stroke:0.2px #000">8:</div>
<div class="t" style="left:374px;width:15px;text-align:center;top:225.6px;font-size:7.6px;color:#000;-webkit-text-stroke:0.2px #000">V</div>
<div class="t" style="left:389.5px;width:83px;text-align:center;top:225.5px;font-size:7.8px;color:#000;letter-spacing:0.2px;-webkit-text-stroke:0.3px #000">USDCAD</div>
<div class="t" style="right:1111px;top:224px;font-size:9.5px;color:#000;-webkit-text-stroke:0.2px #000">Profit year:</div>
<div class="t" style="right:950px;top:224px;font-size:9.5px;color:#000;-webkit-text-stroke:0.2px #000">0.00 EUR / 0.00 %</div>
<div class="abs" style="left:352px;top:237px;width:20px;height:13px;background:#5f9ea0"></div>
<div class="abs" style="left:374px;top:237px;width:15px;height:13px;background:#5f9ea0"></div>
<div class="abs" style="left:391px;top:237px;width:83px;height:13px;background:#4682b4"></div>
<div class="abs" style="left:476px;top:237px;width:83px;height:13px;background:#5f9ea0"></div>
<div class="abs" style="left:561px;top:237px;width:158px;height:13px;background:#5f9ea0"></div>
<div class="t" style="left:351px;width:20px;text-align:center;top:239.9px;font-size:8.5px;color:#000;-webkit-text-stroke:0.2px #000">9:</div>
<div class="t" style="left:374px;width:15px;text-align:center;top:240.6px;font-size:7.6px;color:#000;-webkit-text-stroke:0.2px #000">V</div>
<div class="t" style="left:389.5px;width:83px;text-align:center;top:240.5px;font-size:7.8px;color:#000;letter-spacing:0.2px;-webkit-text-stroke:0.3px #000">GBPCAD</div>
<div class="t" style="right:1111px;top:239px;font-size:9.5px;color:#000;-webkit-text-stroke:0.2px #000">Profit year:</div>
<div class="t" style="right:950px;top:239px;font-size:9.5px;color:#000;-webkit-text-stroke:0.2px #000">0.00 EUR / 0.00 %</div>
<div class="abs" style="left:352px;top:252px;width:20px;height:13px;background:#5f9ea0"></div>
<div class="abs" style="left:374px;top:252px;width:15px;height:13px;background:#5f9ea0"></div>
<div class="abs" style="left:391px;top:252px;width:83px;height:13px;background:#4682b4"></div>
<div class="abs" style="left:476px;top:252px;width:83px;height:13px;background:#5f9ea0"></div>
<div class="abs" style="left:561px;top:252px;width:158px;height:13px;background:#5f9ea0"></div>
<div class="t" style="left:351px;width:20px;text-align:center;top:254.9px;font-size:8.5px;color:#000;-webkit-text-stroke:0.2px #000">10:</div>
<div class="t" style="left:374px;width:15px;text-align:center;top:255.6px;font-size:7.6px;color:#000;-webkit-text-stroke:0.2px #000">V</div>
<div class="t" style="left:389.5px;width:83px;text-align:center;top:255.5px;font-size:7.8px;color:#000;letter-spacing:0.2px;-webkit-text-stroke:0.3px #000">EURAUD</div>
<div class="t" style="right:1111px;top:254px;font-size:9.5px;color:#000;-webkit-text-stroke:0.2px #000">Profit year:</div>
<div class="t" style="right:950px;top:254px;font-size:9.5px;color:#000;-webkit-text-stroke:0.2px #000">0.00 EUR / 0.00 %</div>
<div class="abs" style="left:352px;top:267px;width:20px;height:13px;background:#5f9ea0"></div>
<div class="abs" style="left:374px;top:267px;width:15px;height:13px;background:#5f9ea0"></div>
<div class="abs" style="left:391px;top:267px;width:83px;height:13px;background:#4682b4"></div>
<div class="abs" style="left:476px;top:267px;width:83px;height:13px;background:#5f9ea0"></div>
<div class="abs" style="left:561px;top:267px;width:158px;height:13px;background:#5f9ea0"></div>
<div class="t" style="left:351px;width:20px;text-align:center;top:269.9px;font-size:8.5px;color:#000;-webkit-text-stroke:0.2px #000">11:</div>
<div class="t" style="left:374px;width:15px;text-align:center;top:270.6px;font-size:7.6px;color:#000;-webkit-text-stroke:0.2px #000">V</div>
<div class="t" style="left:389.5px;width:83px;text-align:center;top:270.5px;font-size:7.8px;color:#000;letter-spacing:0.2px;-webkit-text-stroke:0.3px #000">EURCAD</div>
<div class="t" style="right:1111px;top:269px;font-size:9.5px;color:#000;-webkit-text-stroke:0.2px #000">Profit year:</div>
<div class="t" style="right:950px;top:269px;font-size:9.5px;color:#000;-webkit-text-stroke:0.2px #000">0.00 EUR / 0.00 %</div>
<div class="abs" style="left:352px;top:282px;width:20px;height:13px;background:#5f9ea0"></div>
<div class="abs" style="left:374px;top:282px;width:15px;height:13px;background:#5f9ea0"></div>
<div class="abs" style="left:391px;top:282px;width:83px;height:13px;background:#4682b4"></div>
<div class="abs" style="left:476px;top:282px;width:83px;height:13px;background:#5f9ea0"></div>
<div class="abs" style="left:561px;top:282px;width:158px;height:13px;background:#5f9ea0"></div>
<div class="t" style="left:351px;width:20px;text-align:center;top:284.9px;font-size:8.5px;color:#000;-webkit-text-stroke:0.2px #000">12:</div>
<div class="t" style="left:374px;width:15px;text-align:center;top:285.6px;font-size:7.6px;color:#000;-webkit-text-stroke:0.2px #000">V</div>
<div class="t" style="left:389.5px;width:83px;text-align:center;top:285.5px;font-size:7.8px;color:#000;letter-spacing:0.2px;-webkit-text-stroke:0.3px #000">EURGBP</div>
<div class="t" style="right:1111px;top:284px;font-size:9.5px;color:#000;-webkit-text-stroke:0.2px #000">Profit year:</div>
<div class="t" style="right:950px;top:284px;font-size:9.5px;color:#000;-webkit-text-stroke:0.2px #000">0.00 EUR / 0.00 %</div>
<div class="abs" style="left:352px;top:297px;width:20px;height:13px;background:#5f9ea0"></div>
<div class="abs" style="left:374px;top:297px;width:15px;height:13px;background:#5f9ea0"></div>
<div class="abs" style="left:391px;top:297px;width:83px;height:13px;background:#4682b4"></div>
<div class="abs" style="left:476px;top:297px;width:83px;height:13px;background:#5f9ea0"></div>
<div class="abs" style="left:561px;top:297px;width:158px;height:13px;background:#5f9ea0"></div>
<div class="t" style="left:351px;width:20px;text-align:center;top:299.9px;font-size:8.5px;color:#000;-webkit-text-stroke:0.2px #000">13:</div>
<div class="t" style="left:374px;width:15px;text-align:center;top:300.6px;font-size:7.6px;color:#000;-webkit-text-stroke:0.2px #000">V</div>
<div class="t" style="left:389.5px;width:83px;text-align:center;top:300.5px;font-size:7.8px;color:#000;letter-spacing:0.2px;-webkit-text-stroke:0.3px #000">EURJPY</div>
<div class="t" style="right:1111px;top:299px;font-size:9.5px;color:#000;-webkit-text-stroke:0.2px #000">Profit year:</div>
<div class="t" style="right:950px;top:299px;font-size:9.5px;color:#000;-webkit-text-stroke:0.2px #000">0.00 EUR / 0.00 %</div>
<div class="abs" style="left:352px;top:312px;width:20px;height:13px;background:#5f9ea0"></div>
<div class="abs" style="left:374px;top:312px;width:15px;height:13px;background:#5f9ea0"></div>
<div class="abs" style="left:391px;top:312px;width:83px;height:13px;background:#4682b4"></div>
<div class="abs" style="left:476px;top:312px;width:83px;height:13px;background:#5f9ea0"></div>
<div class="abs" style="left:561px;top:312px;width:158px;height:13px;background:#5f9ea0"></div>
<div class="t" style="left:351px;width:20px;text-align:center;top:314.9px;font-size:8.5px;color:#000;-webkit-text-stroke:0.2px #000">14:</div>
<div class="t" style="left:374px;width:15px;text-align:center;top:315.6px;font-size:7.6px;color:#000;-webkit-text-stroke:0.2px #000">V</div>
<div class="t" style="left:389.5px;width:83px;text-align:center;top:315.5px;font-size:7.8px;color:#000;letter-spacing:0.2px;-webkit-text-stroke:0.3px #000">GBPCHF</div>
<div class="t" style="right:1111px;top:314px;font-size:9.5px;color:#000;-webkit-text-stroke:0.2px #000">Profit year:</div>
<div class="t" style="right:950px;top:314px;font-size:9.5px;color:#000;-webkit-text-stroke:0.2px #000">0.00 EUR / 0.00 %</div>
<div class="abs" style="left:352px;top:327px;width:20px;height:13px;background:#5f9ea0"></div>
<div class="abs" style="left:374px;top:327px;width:15px;height:13px;background:#5f9ea0"></div>
<div class="abs" style="left:391px;top:327px;width:83px;height:13px;background:#4682b4"></div>
<div class="abs" style="left:476px;top:327px;width:83px;height:13px;background:#5f9ea0"></div>
<div class="abs" style="left:561px;top:327px;width:158px;height:13px;background:#5f9ea0"></div>
<div class="t" style="left:351px;width:20px;text-align:center;top:329.9px;font-size:8.5px;color:#000;-webkit-text-stroke:0.2px #000">15:</div>
<div class="t" style="left:374px;width:15px;text-align:center;top:330.6px;font-size:7.6px;color:#000;-webkit-text-stroke:0.2px #000">V</div>
<div class="t" style="left:389.5px;width:83px;text-align:center;top:330.5px;font-size:7.8px;color:#000;letter-spacing:0.2px;-webkit-text-stroke:0.3px #000">NZDUSD</div>
<div class="t" style="right:1111px;top:329px;font-size:9.5px;color:#000;-webkit-text-stroke:0.2px #000">Profit year:</div>
<div class="t" style="right:950px;top:329px;font-size:9.5px;color:#000;-webkit-text-stroke:0.2px #000">0.00 EUR / 0.00 %</div>
<div class="abs" style="left:352px;top:342px;width:20px;height:13px;background:#5f9ea0"></div>
<div class="abs" style="left:374px;top:342px;width:15px;height:13px;background:#5f9ea0"></div>
<div class="abs" style="left:391px;top:342px;width:83px;height:13px;background:#4682b4"></div>
<div class="abs" style="left:476px;top:342px;width:83px;height:13px;background:#5f9ea0"></div>
<div class="abs" style="left:561px;top:342px;width:158px;height:13px;background:#5f9ea0"></div>
<div class="t" style="left:351px;width:20px;text-align:center;top:344.9px;font-size:8.5px;color:#000;-webkit-text-stroke:0.2px #000">16:</div>
<div class="t" style="left:374px;width:15px;text-align:center;top:345.6px;font-size:7.6px;color:#000;-webkit-text-stroke:0.2px #000">V</div>
<div class="t" style="left:389.5px;width:83px;text-align:center;top:345.5px;font-size:7.8px;color:#000;letter-spacing:0.2px;-webkit-text-stroke:0.3px #000">GBPNZD</div>
<div class="t" style="right:1111px;top:344px;font-size:9.5px;color:#000;-webkit-text-stroke:0.2px #000">Profit year:</div>
<div class="t" style="right:950px;top:344px;font-size:9.5px;color:#000;-webkit-text-stroke:0.2px #000">0.00 EUR / 0.00 %</div>
<div class="abs" style="left:352px;top:357px;width:20px;height:13px;background:#5f9ea0"></div>
<div class="abs" style="left:374px;top:357px;width:15px;height:13px;background:#5f9ea0"></div>
<div class="abs" style="left:391px;top:357px;width:83px;height:13px;background:#4682b4"></div>
<div class="abs" style="left:476px;top:357px;width:83px;height:13px;background:#5f9ea0"></div>
<div class="abs" style="left:561px;top:357px;width:158px;height:13px;background:#5f9ea0"></div>
<div class="t" style="left:351px;width:20px;text-align:center;top:359.9px;font-size:8.5px;color:#000;-webkit-text-stroke:0.2px #000">17:</div>
<div class="t" style="left:374px;width:15px;text-align:center;top:360.6px;font-size:7.6px;color:#000;-webkit-text-stroke:0.2px #000">V</div>
<div class="t" style="left:389.5px;width:83px;text-align:center;top:360.5px;font-size:7.8px;color:#000;letter-spacing:0.2px;-webkit-text-stroke:0.3px #000">EURCHF</div>
<div class="t" style="right:1111px;top:359px;font-size:9.5px;color:#000;-webkit-text-stroke:0.2px #000">Profit year:</div>
<div class="t" style="right:950px;top:359px;font-size:9.5px;color:#000;-webkit-text-stroke:0.2px #000">0.00 EUR / 0.00 %</div>
<div class="abs" style="left:352px;top:372px;width:20px;height:13px;background:#5f9ea0"></div>
<div class="abs" style="left:374px;top:372px;width:15px;height:13px;background:#5f9ea0"></div>
<div class="abs" style="left:391px;top:372px;width:83px;height:13px;background:#4682b4"></div>
<div class="abs" style="left:476px;top:372px;width:83px;height:13px;background:#5f9ea0"></div>
<div class="abs" style="left:561px;top:372px;width:158px;height:13px;background:#5f9ea0"></div>
<div class="t" style="left:351px;width:20px;text-align:center;top:374.9px;font-size:8.5px;color:#000;-webkit-text-stroke:0.2px #000">18:</div>
<div class="t" style="left:374px;width:15px;text-align:center;top:375.6px;font-size:7.6px;color:#000;-webkit-text-stroke:0.2px #000">V</div>
<div class="t" style="left:389.5px;width:83px;text-align:center;top:375.5px;font-size:7.8px;color:#000;letter-spacing:0.2px;-webkit-text-stroke:0.3px #000">AUDCAD</div>
<div class="t" style="right:1111px;top:374px;font-size:9.5px;color:#000;-webkit-text-stroke:0.2px #000">Profit year:</div>
<div class="t" style="right:950px;top:374px;font-size:9.5px;color:#000;-webkit-text-stroke:0.2px #000">0.00 EUR / 0.00 %</div>
<div class="abs" style="left:352px;top:387px;width:20px;height:13px;background:#5f9ea0"></div>
<div class="abs" style="left:374px;top:387px;width:15px;height:13px;background:#5f9ea0"></div>
<div class="abs" style="left:391px;top:387px;width:83px;height:13px;background:#4682b4"></div>
<div class="abs" style="left:476px;top:387px;width:83px;height:13px;background:#5f9ea0"></div>
<div class="abs" style="left:561px;top:387px;width:158px;height:13px;background:#5f9ea0"></div>
<div class="t" style="left:351px;width:20px;text-align:center;top:389.9px;font-size:8.5px;color:#000;-webkit-text-stroke:0.2px #000">19:</div>
<div class="t" style="left:374px;width:15px;text-align:center;top:390.6px;font-size:7.6px;color:#000;-webkit-text-stroke:0.2px #000">V</div>
<div class="t" style="left:389.5px;width:83px;text-align:center;top:390.5px;font-size:7.8px;color:#000;letter-spacing:0.2px;-webkit-text-stroke:0.3px #000">NZDCAD</div>
<div class="t" style="right:1111px;top:389px;font-size:9.5px;color:#000;-webkit-text-stroke:0.2px #000">Profit year:</div>
<div class="t" style="right:950px;top:389px;font-size:9.5px;color:#000;-webkit-text-stroke:0.2px #000">0.00 EUR / 0.00 %</div>
<div class="abs" style="left:352px;top:402px;width:20px;height:13px;background:#5f9ea0"></div>
<div class="abs" style="left:374px;top:402px;width:15px;height:13px;background:#5f9ea0"></div>
<div class="abs" style="left:391px;top:402px;width:83px;height:13px;background:#4682b4"></div>
<div class="abs" style="left:476px;top:402px;width:83px;height:13px;background:#5f9ea0"></div>
<div class="abs" style="left:561px;top:402px;width:158px;height:13px;background:#5f9ea0"></div>
<div class="t" style="left:351px;width:20px;text-align:center;top:404.9px;font-size:8.5px;color:#000;-webkit-text-stroke:0.2px #000">20:</div>
<div class="t" style="left:374px;width:15px;text-align:center;top:405.6px;font-size:7.6px;color:#000;-webkit-text-stroke:0.2px #000">V</div>
<div class="t" style="left:389.5px;width:83px;text-align:center;top:405.5px;font-size:7.8px;color:#000;letter-spacing:0.2px;-webkit-text-stroke:0.3px #000">NZDCHF</div>
<div class="t" style="right:1111px;top:404px;font-size:9.5px;color:#000;-webkit-text-stroke:0.2px #000">Profit year:</div>
<div class="t" style="right:950px;top:404px;font-size:9.5px;color:#000;-webkit-text-stroke:0.2px #000">0.00 EUR / 0.00 %</div>
<div class="abs" style="left:352px;top:417px;width:20px;height:13px;background:#5f9ea0"></div>
<div class="abs" style="left:374px;top:417px;width:15px;height:13px;background:#5f9ea0"></div>
<div class="abs" style="left:391px;top:417px;width:83px;height:13px;background:#4682b4"></div>
<div class="abs" style="left:476px;top:417px;width:83px;height:13px;background:#5f9ea0"></div>
<div class="abs" style="left:561px;top:417px;width:158px;height:13px;background:#5f9ea0"></div>
<div class="t" style="left:351px;width:20px;text-align:center;top:419.9px;font-size:8.5px;color:#000;-webkit-text-stroke:0.2px #000">21:</div>
<div class="t" style="left:374px;width:15px;text-align:center;top:420.6px;font-size:7.6px;color:#000;-webkit-text-stroke:0.2px #000">V</div>
<div class="t" style="left:389.5px;width:83px;text-align:center;top:420.5px;font-size:7.8px;color:#000;letter-spacing:0.2px;-webkit-text-stroke:0.3px #000">NZDJPY</div>
<div class="t" style="right:1111px;top:419px;font-size:9.5px;color:#000;-webkit-text-stroke:0.2px #000">Profit year:</div>
<div class="t" style="right:950px;top:419px;font-size:9.5px;color:#000;-webkit-text-stroke:0.2px #000">0.00 EUR / 0.00 %</div>
<div class="abs" style="left:352px;top:432px;width:20px;height:13px;background:#5f9ea0"></div>
<div class="abs" style="left:374px;top:432px;width:15px;height:13px;background:#5f9ea0"></div>
<div class="abs" style="left:391px;top:432px;width:83px;height:13px;background:#4682b4"></div>
<div class="abs" style="left:476px;top:432px;width:83px;height:13px;background:#5f9ea0"></div>
<div class="abs" style="left:561px;top:432px;width:158px;height:13px;background:#5f9ea0"></div>
<div class="t" style="left:351px;width:20px;text-align:center;top:434.9px;font-size:8.5px;color:#000;-webkit-text-stroke:0.2px #000">22:</div>
<div class="t" style="left:374px;width:15px;text-align:center;top:435.6px;font-size:7.6px;color:#000;-webkit-text-stroke:0.2px #000">V</div>
<div class="t" style="left:389.5px;width:83px;text-align:center;top:435.5px;font-size:7.8px;color:#000;letter-spacing:0.2px;-webkit-text-stroke:0.3px #000">CHFJPY</div>
<div class="t" style="right:1111px;top:434px;font-size:9.5px;color:#000;-webkit-text-stroke:0.2px #000">Profit year:</div>
<div class="t" style="right:950px;top:434px;font-size:9.5px;color:#000;-webkit-text-stroke:0.2px #000">0.00 EUR / 0.00 %</div>
<div class="abs" style="left:352px;top:447px;width:20px;height:13px;background:#5f9ea0"></div>
<div class="abs" style="left:374px;top:447px;width:15px;height:13px;background:#5f9ea0"></div>
<div class="abs" style="left:391px;top:447px;width:83px;height:13px;background:#4682b4"></div>
<div class="abs" style="left:476px;top:447px;width:83px;height:13px;background:#5f9ea0"></div>
<div class="abs" style="left:561px;top:447px;width:158px;height:13px;background:#5f9ea0"></div>
<div class="t" style="left:351px;width:20px;text-align:center;top:449.9px;font-size:8.5px;color:#000;-webkit-text-stroke:0.2px #000">23:</div>
<div class="t" style="left:374px;width:15px;text-align:center;top:450.6px;font-size:7.6px;color:#000;-webkit-text-stroke:0.2px #000">V</div>
<div class="t" style="left:389.5px;width:83px;text-align:center;top:450.5px;font-size:7.8px;color:#000;letter-spacing:0.2px;-webkit-text-stroke:0.3px #000">CADJPY</div>
<div class="t" style="right:1111px;top:449px;font-size:9.5px;color:#000;-webkit-text-stroke:0.2px #000">Profit year:</div>
<div class="t" style="right:950px;top:449px;font-size:9.5px;color:#000;-webkit-text-stroke:0.2px #000">0.00 EUR / 0.00 %</div>
<div class="abs" style="left:352px;top:462px;width:20px;height:13px;background:#5f9ea0"></div>
<div class="abs" style="left:374px;top:462px;width:15px;height:13px;background:#5f9ea0"></div>
<div class="abs" style="left:391px;top:462px;width:83px;height:13px;background:#4682b4"></div>
<div class="abs" style="left:476px;top:462px;width:83px;height:13px;background:#5f9ea0"></div>
<div class="abs" style="left:561px;top:462px;width:158px;height:13px;background:#5f9ea0"></div>
<div class="t" style="left:351px;width:20px;text-align:center;top:464.9px;font-size:8.5px;color:#000;-webkit-text-stroke:0.2px #000">24:</div>
<div class="t" style="left:374px;width:15px;text-align:center;top:465.6px;font-size:7.6px;color:#000;-webkit-text-stroke:0.2px #000">V</div>
<div class="t" style="left:389.5px;width:83px;text-align:center;top:465.5px;font-size:7.8px;color:#000;letter-spacing:0.2px;-webkit-text-stroke:0.3px #000">CADCHF</div>
<div class="t" style="right:1111px;top:464px;font-size:9.5px;color:#000;-webkit-text-stroke:0.2px #000">Profit year:</div>
<div class="t" style="right:950px;top:464px;font-size:9.5px;color:#000;-webkit-text-stroke:0.2px #000">0.00 EUR / 0.00 %</div>
<div class="abs" style="left:352px;top:477px;width:20px;height:13px;background:#5f9ea0"></div>
<div class="abs" style="left:374px;top:477px;width:15px;height:13px;background:#5f9ea0"></div>
<div class="abs" style="left:391px;top:477px;width:83px;height:13px;background:#4682b4"></div>
<div class="abs" style="left:476px;top:477px;width:83px;height:13px;background:#5f9ea0"></div>
<div class="abs" style="left:561px;top:477px;width:158px;height:13px;background:#5f9ea0"></div>
<div class="t" style="left:351px;width:20px;text-align:center;top:479.9px;font-size:8.5px;color:#000;-webkit-text-stroke:0.2px #000">25:</div>
<div class="t" style="left:374px;width:15px;text-align:center;top:480.6px;font-size:7.6px;color:#000;-webkit-text-stroke:0.2px #000">V</div>
<div class="t" style="left:389.5px;width:83px;text-align:center;top:480.5px;font-size:7.8px;color:#000;letter-spacing:0.2px;-webkit-text-stroke:0.3px #000">AUDNZD</div>
<div class="t" style="right:1111px;top:479px;font-size:9.5px;color:#000;-webkit-text-stroke:0.2px #000">Profit year:</div>
<div class="t" style="right:950px;top:479px;font-size:9.5px;color:#000;-webkit-text-stroke:0.2px #000">0.00 EUR / 0.00 %</div>
<div class="abs" style="left:352px;top:492px;width:20px;height:13px;background:#5f9ea0"></div>
<div class="abs" style="left:374px;top:492px;width:15px;height:13px;background:#5f9ea0"></div>
<div class="abs" style="left:391px;top:492px;width:83px;height:13px;background:#4682b4"></div>
<div class="abs" style="left:476px;top:492px;width:83px;height:13px;background:#5f9ea0"></div>
<div class="abs" style="left:561px;top:492px;width:158px;height:13px;background:#5f9ea0"></div>
<div class="t" style="left:351px;width:20px;text-align:center;top:494.9px;font-size:8.5px;color:#000;-webkit-text-stroke:0.2px #000">26:</div>
<div class="t" style="left:374px;width:15px;text-align:center;top:495.6px;font-size:7.6px;color:#000;-webkit-text-stroke:0.2px #000">V</div>
<div class="t" style="left:389.5px;width:83px;text-align:center;top:495.5px;font-size:7.8px;color:#000;letter-spacing:0.2px;-webkit-text-stroke:0.3px #000">EURNZD</div>
<div class="t" style="right:1111px;top:494px;font-size:9.5px;color:#000;-webkit-text-stroke:0.2px #000">Profit year:</div>
<div class="t" style="right:950px;top:494px;font-size:9.5px;color:#000;-webkit-text-stroke:0.2px #000">0.00 EUR / 0.00 %</div>
<div class="abs" style="left:352px;top:507px;width:20px;height:13px;background:#5f9ea0"></div>
<div class="abs" style="left:374px;top:507px;width:15px;height:13px;background:#5f9ea0"></div>
<div class="abs" style="left:391px;top:507px;width:83px;height:13px;background:#4682b4"></div>
<div class="abs" style="left:476px;top:507px;width:83px;height:13px;background:#5f9ea0"></div>
<div class="abs" style="left:561px;top:507px;width:158px;height:13px;background:#5f9ea0"></div>
<div class="t" style="left:351px;width:20px;text-align:center;top:509.9px;font-size:8.5px;color:#000;-webkit-text-stroke:0.2px #000">27:</div>
<div class="t" style="left:374px;width:15px;text-align:center;top:510.6px;font-size:7.6px;color:#000;-webkit-text-stroke:0.2px #000">V</div>
<div class="t" style="left:389.5px;width:83px;text-align:center;top:510.5px;font-size:7.8px;color:#000;letter-spacing:0.2px;-webkit-text-stroke:0.3px #000">AUDJPY</div>
<div class="t" style="right:1111px;top:509px;font-size:9.5px;color:#000;-webkit-text-stroke:0.2px #000">Profit year:</div>
<div class="t" style="right:950px;top:509px;font-size:9.5px;color:#000;-webkit-text-stroke:0.2px #000">0.00 EUR / 0.00 %</div>
<div class="abs" style="left:352px;top:522px;width:20px;height:13px;background:#5f9ea0"></div>
<div class="abs" style="left:374px;top:522px;width:15px;height:13px;background:#5f9ea0"></div>
<div class="abs" style="left:391px;top:522px;width:83px;height:13px;background:#4682b4"></div>
<div class="abs" style="left:476px;top:522px;width:83px;height:13px;background:#5f9ea0"></div>
<div class="abs" style="left:561px;top:522px;width:158px;height:13px;background:#5f9ea0"></div>
<div class="t" style="left:351px;width:20px;text-align:center;top:524.9px;font-size:8.5px;color:#000;-webkit-text-stroke:0.2px #000">28:</div>
<div class="t" style="left:374px;width:15px;text-align:center;top:525.6px;font-size:7.6px;color:#000;-webkit-text-stroke:0.2px #000">V</div>
<div class="t" style="left:389.5px;width:83px;text-align:center;top:525.5px;font-size:7.8px;color:#000;letter-spacing:0.2px;-webkit-text-stroke:0.3px #000">AUDCHF</div>
<div class="t" style="right:1111px;top:524px;font-size:9.5px;color:#000;-webkit-text-stroke:0.2px #000">Profit year:</div>
<div class="t" style="right:950px;top:524px;font-size:9.5px;color:#000;-webkit-text-stroke:0.2px #000">0.00 EUR / 0.00 %</div>
<div class="abs" style="left:783px;top:45px;width:881px;height:600px;background:#68c8ea;border-left:1px solid #333;border-top:1px solid #333;border-bottom:1px solid #2b2b2b"></div>
<div class="t" style="left:1179px;top:53.2px;font-size:15px;color:#000;letter-spacing:-0.25px">Task Manager</div>
<svg class="abs" style="left:786px;top:48px" width="30" height="25">
<rect x="7" y="10.5" width="2.6" height="9" rx="1" fill="#c0bcbc" stroke="#8a8686" stroke-width="0.6"/><rect x="7.3" y="11" width="2" height="1.6" fill="#3c3"/>
<rect x="10.8" y="6.5" width="12" height="10" rx="1" fill="#d8d2d2" stroke="#b0aaaa" stroke-width="0.8"/><rect x="12" y="7.6" width="9.6" height="7.6" fill="#fff"/>
<path d="M12 12 L21.6 12 L21.6 15.2 L12 15.2Z" fill="#c8ecfa"/>
<polyline points="12,11.4 14.3,9.5 18.4,13.4 20.7,11.4" fill="none" stroke="#2a7fc8" stroke-width="1.1"/>
<rect x="16" y="16.5" width="2" height="1.5" fill="#aaa"/><ellipse cx="17" cy="19" rx="3.6" ry="1.2" fill="#c8c2c2"/></svg>
<div class="abs" style="left:1560px;top:45px;width:29px;height:22px;border:1px solid #2b2b2b;border-top:none"></div>
<div class="abs" style="left:1588px;top:45px;width:27px;height:22px;border:1px solid #2b2b2b;border-top:none"></div>
<div class="abs" style="left:1614px;top:45px;width:47px;height:22px;background:#c75050;border:1px solid #2b2b2b;border-top:none"></div>
<div class="abs" style="left:1569px;top:56px;width:10px;height:4px;background:#000"></div>
<div class="abs" style="left:1597px;top:52px;width:10px;height:8px;border:2px solid #000"></div>
<svg class="abs" style="left:1630px;top:50px" width="16" height="12"><g stroke="#000" stroke-width="2.3"><line x1="3.5" y1="2" x2="10.5" y2="10"/><line x1="10.5" y1="2" x2="3.5" y2="10"/></g></svg>
<div class="abs" style="left:791px;top:76px;width:868px;height:561px;background:#fff"></div>
<div class="abs" style="left:791px;top:76px;width:868px;height:20px;background:#f0f0f0"></div>
<div class="t" style="left:798px;top:80.2px;font-size:12px;color:#000;letter-spacing:-0.3px">File</div>
<div class="t" style="left:830px;top:80.2px;font-size:12px;color:#000">Options</div>
<div class="t" style="left:885.5px;top:80.2px;font-size:12px;color:#000">View</div>
<div class="abs" style="left:791px;top:120px;width:868px;height:1px;background:#a0a0a0"></div>
<div class="abs" style="left:793px;top:100px;width:62px;height:21px;background:#f0f0f0;border:1px solid #a0a0a0"></div>
<div class="t" style="left:793px;width:62px;text-align:center;top:105.4px;font-size:11.5px;color:#000">Processes</div>
<div class="abs" style="left:855px;top:98px;width:83px;height:24px;background:#fff;border:1px solid #a0a0a0;border-bottom:none"></div>
<div class="t" style="left:855px;width:83px;text-align:center;top:102.8px;font-size:12px;color:#000">Performance</div>
<div class="abs" style="left:938px;top:100px;width:38px;height:21px;background:#f0f0f0;border:1px solid #a0a0a0"></div>
<div class="t" style="left:938px;width:38px;text-align:center;top:105.4px;font-size:11.5px;color:#000">Users</div>
<div class="abs" style="left:976px;top:100px;width:47px;height:21px;background:#f0f0f0;border:1px solid #a0a0a0"></div>
<div class="t" style="left:976px;width:47px;text-align:center;top:105.4px;font-size:11.5px;color:#000">Details</div>
<div class="abs" style="left:1023px;top:100px;width:54px;height:21px;background:#f0f0f0;border:1px solid #a0a0a0"></div>
<div class="t" style="left:1023px;width:54px;text-align:center;top:105.4px;font-size:11.5px;color:#000">Services</div>
<div class="abs" style="left:795px;top:184px;width:204px;height:51px;background:#dcebfc;border:1px solid #7da2ce"></div>
<svg class="abs" style="left:804px;top:141px" width="18" height="18"><defs><linearGradient id="g150" x1="0" y1="0" x2="0" y2="1"><stop offset="0" stop-color="#fff"/><stop offset="1" stop-color="#dce8f5"/></linearGradient></defs><circle cx="9" cy="9" r="6.5" fill="url(#g150)" stroke="#2279c2" stroke-width="1.1"/></svg>
<svg class="abs" style="left:804px;top:192px" width="18" height="18"><defs><linearGradient id="g201" x1="0" y1="0" x2="0" y2="1"><stop offset="0" stop-color="#fff"/><stop offset="1" stop-color="#f8eefb"/></linearGradient></defs><circle cx="9" cy="9" r="6.5" fill="url(#g201)" stroke="#8b12ae" stroke-width="1.1"/></svg>
<svg class="abs" style="left:804px;top:243px" width="18" height="18"><defs><linearGradient id="g252" x1="0" y1="0" x2="0" y2="1"><stop offset="0" stop-color="#fff"/><stop offset="1" stop-color="#fdf3ea"/></linearGradient></defs><circle cx="9" cy="9" r="6.5" fill="url(#g252)" stroke="#a74f01" stroke-width="1.1"/></svg>
<div class="t" style="left:831px;top:142.7px;font-size:14.8px;color:#000">CPU</div>
<div class="t" style="left:832px;top:161.2px;font-size:11.5px;color:#000">18% 3.40 GHz</div>
<div class="t" style="left:831px;top:193.9px;font-size:14.8px;color:#000">Memory</div>
<div class="t" style="left:832px;top:212.8px;font-size:11px;color:#000">7.5/8.0 GB (94%)</div>
<div class="t" style="left:831px;top:244.9px;font-size:14.8px;color:#000">Ethernet</div>
<div class="t" style="left:832px;top:263.7px;font-size:11.1px;color:#000"><span style="color:#6d6d6d">S:</span> 24.0 Kbps <span style="color:#6d6d6d">R:</span> 200 Kbps</div>
<div class="abs" style="left:1002px;top:143px;width:1px;height:441px;background:#d9d9d9"></div>
<div class="t" style="left:1028px;top:143.1px;font-size:28px;color:#000">Memory</div>
<div class="t" style="right:29.5px;top:154.2px;font-size:15px;color:#000;letter-spacing:-0.3px">8.0 GB</div>
<div class="t" style="left:1029px;top:180.4px;font-size:11.3px;color:#6d6d6d">Memory usage</div>
<div class="t" style="right:29.5px;top:180.4px;font-size:10.6px;color:#6d6d6d">8.0 GB</div>
<svg class="abs" style="left:1029px;top:195px" width="606" height="114"><rect x="0" y="0" width="606" height="114" fill="#fff"/><polygon points="2,9.5 362,9.5 370,8.5 464,8.5 473,7.5 604,7.5 604,112 2,112" fill="#f4f2f4"/><line x1="1" y1="12.5" x2="605" y2="12.5" stroke="#e6d4ec"/><line x1="1" y1="23.5" x2="605" y2="23.5" stroke="#e6d4ec"/><line x1="1" y1="34.5" x2="605" y2="34.5" stroke="#e6d4ec"/><line x1="1" y1="46.5" x2="605" y2="46.5" stroke="#e6d4ec"/><line x1="1" y1="57.5" x2="605" y2="57.5" stroke="#e6d4ec"/><line x1="1" y1="68.5" x2="605" y2="68.5" stroke="#e6d4ec"/><line x1="1" y1="80.5" x2="605" y2="80.5" stroke="#e6d4ec"/><line x1="1" y1="91.5" x2="605" y2="91.5" stroke="#e6d4ec"/><line x1="1" y1="102.5" x2="605" y2="102.5" stroke="#e6d4ec"/><line x1="21.5" y1="1" x2="21.5" y2="113" stroke="#e6d4ec"/><line x1="51.5" y1="1" x2="51.5" y2="113" stroke="#e6d4ec"/><line x1="82.5" y1="1" x2="82.5" y2="113" stroke="#e6d4ec"/><line x1="113.5" y1="1" x2="113.5" y2="113" stroke="#e6d4ec"/><line x1="144.5" y1="1" x2="144.5" y2="113" stroke="#e6d4ec"/><line x1="174.5" y1="1" x2="174.5" y2="113" stroke="#e6d4ec"/><line x1="205.5" y1="1" x2="205.5" y2="113" stroke="#e6d4ec"/><line x1="236.5" y1="1" x2="236.5" y2="113" stroke="#e6d4ec"/><line x1="267.5" y1="1" x2="267.5" y2="113" stroke="#e6d4ec"/><line x1="297.5" y1="1" x2="297.5" y2="113" stroke="#e6d4ec"/><line x1="328.5" y1="1" x2="328.5" y2="113" stroke="#e6d4ec"/><line x1="359.5" y1="1" x2="359.5" y2="113" stroke="#e6d4ec"/><line x1="390.5" y1="1" x2="390.5" y2="113" stroke="#e6d4ec"/><line x1="420.5" y1="1" x2="420.5" y2="113" stroke="#e6d4ec"/><line x1="451.5" y1="1" x2="451.5" y2="113" stroke="#e6d4ec"/><line x1="482.5" y1="1" x2="482.5" y2="113" stroke="#e6d4ec"/><line x1="513.5" y1="1" x2="513.5" y2="113" stroke="#e6d4ec"/><line x1="543.5" y1="1" x2="543.5" y2="113" stroke="#e6d4ec"/><line x1="574.5" y1="1" x2="574.5" y2="113" stroke="#e6d4ec"/><polyline points="1,9.5 362,9.5 370,8.5 464,8.5 473,7.5 605,7.5" fill="none" stroke="#8b12ae" stroke-width="1.1"/><rect x="0.5" y="0.5" width="605" height="113" fill="none" stroke="#8b12ae"/></svg>
<div class="t" style="left:1029px;top:312.1px;font-size:11.3px;color:#6d6d6d">60 seconds</div>
<div class="t" style="right:29.5px;top:312.1px;font-size:11px;color:#6d6d6d">0</div>
<div class="t" style="left:1029px;top:331.3px;font-size:11.6px;color:#6d6d6d;letter-spacing:0.1px">Memory composition</div>
<svg class="abs" style="left:1029px;top:348px" width="606" height="52"><rect x="0.5" y="0.5" width="605" height="51" fill="#f2f0f3" stroke="#8b12ae"/><rect x="570" y="1" width="35" height="50" fill="#fff"/><line x1="569.5" y1="1" x2="569.5" y2="51" stroke="#c9a0d8"/></svg>
<div class="t" style="left:1029px;top:425.8px;font-size:12px;color:#6d6d6d">In use</div>
<div class="t" style="left:1029px;top:445.7px;font-size:19px;color:#000;letter-spacing:-0.4px">7.5 GB</div>
<div class="t" style="left:1105.5px;top:425.8px;font-size:12px;color:#6d6d6d">Available</div>
<div class="t" style="left:1105.5px;top:445.7px;font-size:19px;color:#000;letter-spacing:0px">505 MB</div>
<div class="t" style="left:1029px;top:476.7px;font-size:12px;color:#6d6d6d">Committed</div>
<div class="t" style="left:1029px;top:496.6px;font-size:19px;color:#000;letter-spacing:0px">11.5/14.8 GB</div>
<div class="t" style="left:1162px;top:476.7px;font-size:12px;color:#6d6d6d">Cached</div>
<div class="t" style="left:1162px;top:496.6px;font-size:19px;color:#000;letter-spacing:0px">509 MB</div>
<div class="t" style="left:1029px;top:528.0px;font-size:12px;color:#6d6d6d">Paged pool</div>
<div class="t" style="left:1029px;top:547.9px;font-size:19px;color:#000;letter-spacing:0px">119 MB</div>
<div class="t" style="left:1117px;top:528.0px;font-size:12px;color:#6d6d6d">Non-paged pool</div>
<div class="t" style="left:1117px;top:547.9px;font-size:19px;color:#000;letter-spacing:0px">48.6 MB</div>
<div class="t" style="left:1240px;top:426px;font-size:11.3px;color:#6d6d6d">Slots used:</div>
<div class="t" style="left:1355.5px;top:426px;font-size:11.5px;color:#000">N/A</div>
<div class="t" style="left:1240px;top:443.8px;font-size:11.3px;color:#6d6d6d">Hardware reserved:</div>
<div class="t" style="left:1355.5px;top:443.8px;font-size:11.3px;color:#000;letter-spacing:-0.3px">0.5 MB</div>
<svg class="abs" style="left:797px;top:601px" width="24" height="24"><circle cx="11.4" cy="11.3" r="9" fill="none" stroke="#555" stroke-width="1.2"/><polyline points="7.4,13.6 11.4,9.6 15.4,13.6" fill="none" stroke="#222" stroke-width="2"/></svg>
<div class="t" style="left:825px;top:607.6px;font-size:11.3px;color:#000">Fewer details</div>
<div class="abs" style="left:901px;top:605px;width:1px;height:14px;background:#d4d4d4"></div>
<svg class="abs" style="left:908px;top:602px" width="20" height="20"><circle cx="9.8" cy="10" r="7" fill="#f2efea" stroke="#8c8c8c" stroke-width="1.6"/><path d="M6.2 7.6 A4.6 4.6 0 0 0 7.6 13.6" fill="none" stroke="#7a9a7a" stroke-width="0.9"/><path d="M13.2 6.8 A4.6 4.6 0 0 1 14.6 12.2" fill="none" stroke="#e87a30" stroke-width="1.1"/><line x1="6" y1="5.4" x2="11.8" y2="12.6" stroke="#d81818" stroke-width="2.2"/></svg>
<div class="t" style="left:931.5px;top:607.1px;font-size:12px;color:#0066cc;letter-spacing:-0.1px">Open Resource Monitor</div>
</body></html>
